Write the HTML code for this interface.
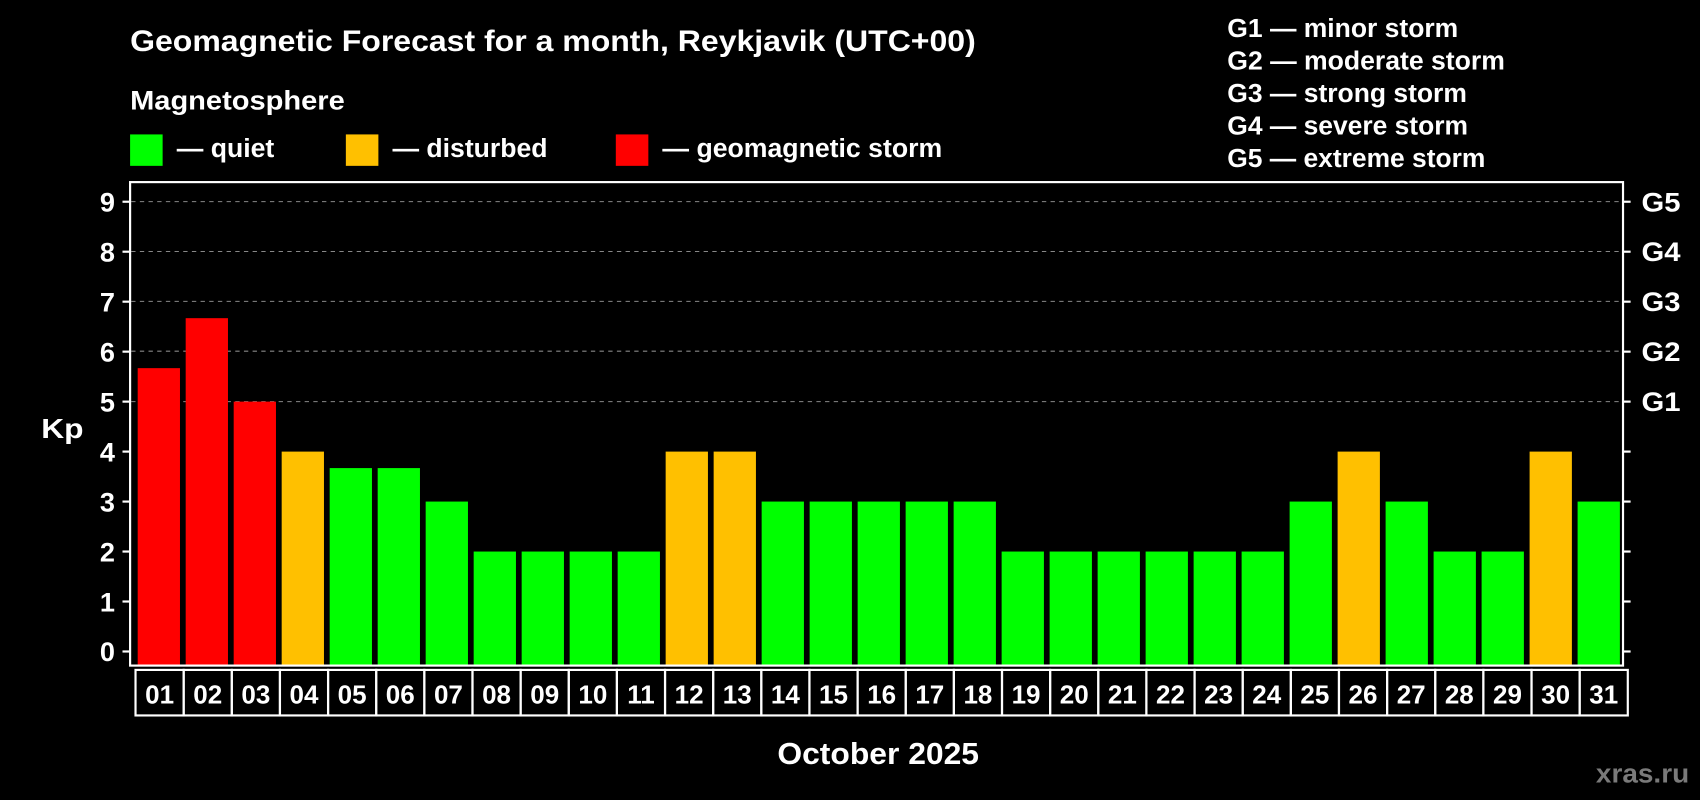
<!DOCTYPE html>
<html><head><meta charset="utf-8"><style>html,body{margin:0;padding:0;background:#000;overflow:hidden}svg{display:block}text{font-family:"Liberation Sans",Arial,sans-serif;font-weight:bold;fill:#fff}</style></head><body>
<svg width="1700" height="800" viewBox="0 0 1568 738" preserveAspectRatio="none" xmlns="http://www.w3.org/2000/svg">
<rect width="1568" height="738" fill="#000"/>
<text x="120" y="47" font-size="27" textLength="780" lengthAdjust="spacingAndGlyphs">Geomagnetic Forecast for a month, Reykjavik (UTC+00)</text>
<text x="120" y="101" font-size="25" textLength="198" lengthAdjust="spacingAndGlyphs">Magnetosphere</text>
<rect x="120" y="124" width="30" height="29" fill="#00ff00"/><text x="163" y="145" font-size="24" textLength="90" lengthAdjust="spacingAndGlyphs">— quiet</text>
<rect x="319" y="124" width="30" height="29" fill="#ffc000"/><text x="362" y="145" font-size="24" textLength="143" lengthAdjust="spacingAndGlyphs">— disturbed</text>
<rect x="568" y="124" width="30" height="29" fill="#ff0000"/><text x="611" y="145" font-size="24" textLength="258" lengthAdjust="spacingAndGlyphs">— geomagnetic storm</text>
<g font-size="24">
<text x="1132" y="34" textLength="213" lengthAdjust="spacingAndGlyphs">G1 — minor storm</text>
<text x="1132" y="64" textLength="256" lengthAdjust="spacingAndGlyphs">G2 — moderate storm</text>
<text x="1132" y="94" textLength="221" lengthAdjust="spacingAndGlyphs">G3 — strong storm</text>
<text x="1132" y="124" textLength="222" lengthAdjust="spacingAndGlyphs">G4 — severe storm</text>
<text x="1132" y="154" textLength="238" lengthAdjust="spacingAndGlyphs">G5 — extreme storm</text>
</g>
<g id="grid" stroke="#888" stroke-width="1" stroke-dasharray="4,4">
<line x1="121" x2="1497" y1="186" y2="186"/><line x1="121" x2="1497" y1="232" y2="232"/><line x1="121" x2="1497" y1="278" y2="278"/><line x1="121" x2="1497" y1="324" y2="324"/><line x1="121" x2="1497" y1="370.5" y2="370.5"/>
</g>
<g id="bars"></g>
<rect x="120" y="168" width="1377" height="446" fill="none" stroke="#fff" stroke-width="2"/>
<g id="ticks" stroke="#fff" stroke-width="2"></g>
<g id="ylab" font-size="25" text-anchor="end"></g>
<g font-size="25">
<text x="1514" y="195" textLength="36" lengthAdjust="spacingAndGlyphs">G5</text><text x="1514" y="241" textLength="36" lengthAdjust="spacingAndGlyphs">G4</text><text x="1514" y="287" textLength="36" lengthAdjust="spacingAndGlyphs">G3</text><text x="1514" y="333" textLength="36" lengthAdjust="spacingAndGlyphs">G2</text><text x="1514" y="379" textLength="36" lengthAdjust="spacingAndGlyphs">G1</text>
</g>
<text x="38" y="404" font-size="26" textLength="39" lengthAdjust="spacingAndGlyphs">Kp</text>
<g id="days" font-size="24" text-anchor="middle"></g>
<text x="717" y="705" font-size="28" textLength="186" lengthAdjust="spacingAndGlyphs">October 2025</text>
<text x="1472" y="722" font-size="25" textLength="86" lengthAdjust="spacingAndGlyphs" style="fill:#7a7a7a">xras.ru</text>
</svg>
<script>
var v=[5.67,6.67,5,4,3.67,3.67,3,2,2,2,2,4,4,3,3,3,3,3,2,2,2,2,2,2,3,4,3,2,2,4,3];
var ns="http://www.w3.org/2000/svg";
function el(p,t,a,txt){var e=document.createElementNS(ns,t);for(var k in a)e.setAttribute(k,a[k]);if(txt!==undefined)e.textContent=txt;document.getElementById(p).appendChild(e);}
for(var i=0;i<31;i++){var x=127+i*44.27,y=601-46.1*v[i];var c=v[i]>=5?"#ff0000":(v[i]>=4?"#ffc000":"#00ff00");
el("bars","rect",{x:x,y:y,width:39,height:614-y,fill:c});
var bx=125+i*44.4;el("days","rect",{x:bx,y:618,width:44.4,height:42,fill:"none",stroke:"#fff","stroke-width":2});
el("days","text",{x:bx+22.2,y:649},(i<9?"0":"")+(i+1));}
for(var k=0;k<=9;k++){var y=601-46.1*k;el("ticks","line",{x1:113,x2:120,y1:y,y2:y});el("ticks","line",{x1:1497,x2:1504,y1:y,y2:y});el("ylab","text",{x:106,y:y+9},""+k);}
</script>
</body></html>
